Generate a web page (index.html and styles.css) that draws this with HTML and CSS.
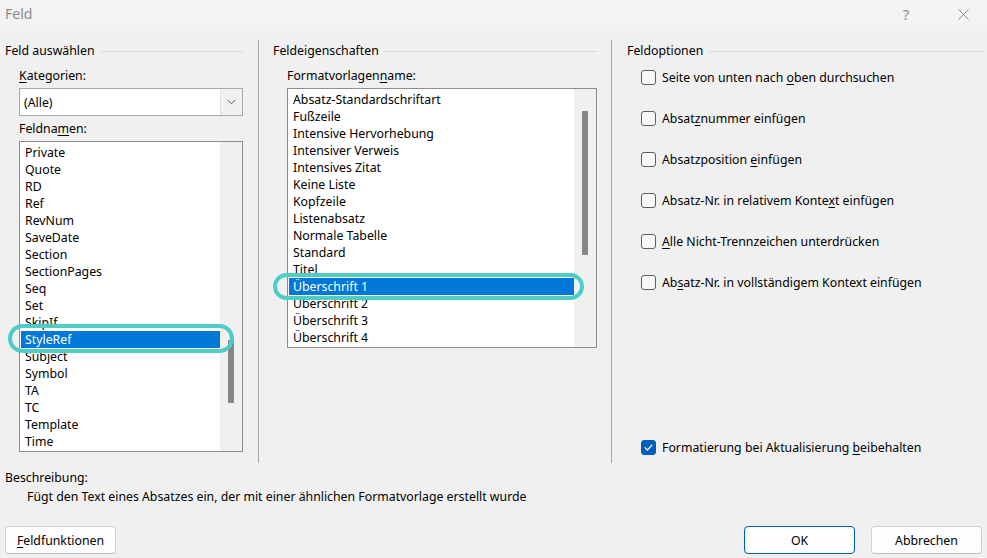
FILE: index.html
```html
<!DOCTYPE html>
<html lang="de">
<head>
<meta charset="utf-8">
<title>Feld</title>
<link rel="stylesheet" href="styles.css">
</head>
<body>
<div class="window">
  <div class="titlebar">
    <span class="title">Feld</span>
    <div class="tb-buttons">
      <span class="tb-btn help">?</span>
      <span class="tb-btn close">
        <svg width="11" height="11" viewBox="0 0 11 11"><path d="M0.5 0.5 L10.5 10.5 M10.5 0.5 L0.5 10.5" stroke="#8c8c8c" stroke-width="1" fill="none"/></svg>
      </span>
    </div>
  </div>

  <div class="main">
    <section class="col col-left">
      <div class="group-head"><span>Feld auswählen</span><span class="rule"></span></div>
      <div class="inner">
        <div class="label"><u>K</u>ategorien:</div>
        <div class="combo">
          <span class="combo-text">(Alle)</span>
          <span class="combo-btn">
            <svg width="9" height="6" viewBox="0 0 9 6"><path d="M0.5 0.8 L4.5 4.8 L8.5 0.8" stroke="#5c5c5c" stroke-width="1" fill="none"/></svg>
          </span>
        </div>
        <div class="label label-gap">Feldna<u>m</u>en:</div>
        <div class="listbox list-left">
          <div class="items">
            <div class="item">Private</div>
            <div class="item">Quote</div>
            <div class="item">RD</div>
            <div class="item">Ref</div>
            <div class="item">RevNum</div>
            <div class="item">SaveDate</div>
            <div class="item">Section</div>
            <div class="item">SectionPages</div>
            <div class="item">Seq</div>
            <div class="item">Set</div>
            <div class="item">SkipIf</div>
            <div class="item selected">StyleRef</div>
            <div class="item">Subject</div>
            <div class="item">Symbol</div>
            <div class="item">TA</div>
            <div class="item">TC</div>
            <div class="item">Template</div>
            <div class="item">Time</div>
          </div>
          <div class="track track-left"><div class="thumb thumb-left"></div></div>
          <div class="ring ring-left"></div>
        </div>
      </div>
    </section>

    <div class="vsep"></div>

    <section class="col col-mid">
      <div class="group-head"><span>Feldeigenschaften</span><span class="rule"></span></div>
      <div class="inner">
        <div class="label">Formatvorlagen<u>n</u>ame:</div>
        <div class="listbox list-mid">
          <div class="items">
            <div class="item">Absatz-Standardschriftart</div>
            <div class="item">Fußzeile</div>
            <div class="item">Intensive Hervorhebung</div>
            <div class="item">Intensiver Verweis</div>
            <div class="item">Intensives Zitat</div>
            <div class="item">Keine Liste</div>
            <div class="item">Kopfzeile</div>
            <div class="item">Listenabsatz</div>
            <div class="item">Normale Tabelle</div>
            <div class="item">Standard</div>
            <div class="item">Titel</div>
            <div class="item selected">Überschrift 1</div>
            <div class="item">Überschrift 2</div>
            <div class="item">Überschrift 3</div>
            <div class="item">Überschrift 4</div>
          </div>
          <div class="track track-mid"><div class="thumb thumb-mid"></div></div>
          <div class="ring ring-mid"></div>
        </div>
      </div>
    </section>

    <div class="vsep vsep-right"></div>

    <section class="col col-right">
      <div class="group-head"><span>Feldoptionen</span><span class="rule"></span></div>
      <div class="options">
        <label class="opt"><span class="box"></span><span>Seite von unten nach <u>o</u>ben durchsuchen</span></label>
        <label class="opt"><span class="box"></span><span>Absat<u>z</u>nummer einfügen</span></label>
        <label class="opt"><span class="box"></span><span>Absatzposition <u>e</u>infügen</span></label>
        <label class="opt"><span class="box"></span><span>Absatz-Nr. in relativem Konte<u>x</u>t einfügen</span></label>
        <label class="opt"><span class="box"></span><span><u>A</u>lle Nicht-Trennzeichen unterdrücken</span></label>
        <label class="opt"><span class="box"></span><span>Ab<u>s</u>atz-Nr. in vollständigem Kontext einfügen</span></label>
      </div>
      <label class="opt opt-last"><span class="box checked">
        <svg width="15" height="15" viewBox="0 0 15 15"><path d="M4 7.6 L6.4 10 L11 5.2" stroke="#ffffff" stroke-width="1.2" fill="none" stroke-linecap="round" stroke-linejoin="round"/></svg>
      </span><span>Formatierung bei Aktualisierung <u>b</u>eibehalten</span></label>
    </section>
  </div>

  <div class="desc">
    <div class="desc-label">Beschreibung:</div>
    <div class="desc-text">Fügt den Text eines Absatzes ein, der mit einer ähnlichen Formatvorlage erstellt wurde</div>
  </div>

  <div class="footer">
    <button class="btn"><u>F</u>eldfunktionen</button>
    <div class="spacer"></div>
    <button class="btn btn-default">OK</button>
    <button class="btn">Abbrechen</button>
  </div>
</div>
</body>
</html>
```

FILE: styles.css
```css
html, body {
  margin: 0;
  padding: 0;
}
body {
  width: 987px;
  height: 558px;
  overflow: hidden;
  background: #f0f0f0;
  font-family: "Noto Sans", "Open Sans", sans-serif;
  font-size: 12.3px;
  color: #000;
}
u {
  text-decoration-thickness: 1px;
  text-underline-offset: 2px;
}
.window {
  width: 987px;
  height: 558px;
  display: flex;
  flex-direction: column;
}

/* title bar */
.titlebar {
  height: 31px;
  background: #f3f3f3;
  display: flex;
  align-items: center;
  justify-content: space-between;
  padding-left: 5px;
  box-sizing: border-box;
}
.title {
  font-size: 14px;
  color: #8a8a8a;
  line-height: 20px;
  margin-top: -3px;
}
.tb-buttons {
  display: flex;
  align-items: center;
  height: 100%;
  padding-right: 1px;
}
.tb-btn {
  width: 46px;
  height: 100%;
  display: flex;
  align-items: center;
  justify-content: center;
  color: #8c8c8c;
}
.help {
  font-size: 15px;
  margin-right: 11px;
  margin-top: -3px;
}
.close {
  margin-top: -3px;
}

/* main three columns */
.main {
  display: flex;
  margin-top: 9px;
  height: 423px;
  padding-left: 5px;
}
.col {
  display: flex;
  flex-direction: column;
}
.col-left { width: 238px; }
.col-mid { width: 324px; }
.col-right { width: 358px; }
.vsep {
  width: 1px;
  background: #a6a6a6;
  margin: 0 14px 0 15px;
}
.vsep-right {
  margin: 0 15px 0 14px;
}
.group-head {
  height: 20px;
  display: flex;
  align-items: center;
  gap: 6px;
  white-space: nowrap;
}
.group-head .rule {
  flex: 1;
  height: 1px;
  background: #dadada;
  margin-top: 2px;
}
.inner {
  padding-left: 14px;
  display: flex;
  flex-direction: column;
}
.label {
  line-height: 16px;
  margin-top: 8px;
}
.label-gap {
  margin-top: 5px;
}

/* combo box */
.combo {
  margin-top: 4px;
  height: 28px;
  box-sizing: border-box;
  border: 1px solid #a9a9a9;
  background: #fff;
  display: flex;
  align-items: stretch;
}
.combo-text {
  flex: 1;
  padding-left: 4px;
  display: flex;
  align-items: center;
}
.combo-btn {
  width: 21px;
  margin: 0 0 0 0;
  background: #f0f0f0;
  border-left: 1px solid #e2e2e2;
  display: flex;
  align-items: center;
  justify-content: center;
}

/* list boxes */
.listbox {
  position: relative;
  margin-top: 4px;
  box-sizing: border-box;
  border: 1px solid #8c8c8c;
  display: flex;
  background: #fff;
}
.list-left { height: 311px; }
.list-mid { height: 260px; }
.items {
  flex: 1;
  padding-top: 2px;
  background: #fff;
  overflow: hidden;
}
.item {
  height: 17px;
  line-height: 17px;
  padding-left: 4px;
  margin-left: 1px;
  white-space: nowrap;
}
.item.selected {
  background: #0078d7;
  color: #fff;
}
.track {
  width: 22px;
  background: #f0f0f0;
  display: flex;
  flex-direction: column;
  align-items: center;
}
.thumb {
  width: 6px;
  background: #868686;
  border-radius: 1px;
}
.track-left { padding-top: 198px; }
.thumb-left { height: 63px; }
.track-mid { padding-top: 22px; }
.thumb-mid { height: 144px; }

/* highlight rings (annotation overlay) */
.ring {
  position: absolute;
  box-sizing: border-box;
  border: 4px solid #4dcdc6;
  border-radius: 15px;
  pointer-events: none;
}
.ring-left {
  left: -12px;
  top: 182px;
  width: 226px;
  height: 29px;
}
.ring-mid {
  left: -15px;
  top: 184px;
  width: 311px;
  height: 27px;
}

/* options */
.options {
  display: flex;
  flex-direction: column;
  gap: 21px;
  margin-top: 7px;
  padding-left: 14px;
}
.opt {
  display: flex;
  align-items: center;
  gap: 6px;
  height: 20px;
  white-space: nowrap;
}
.opt-last {
  margin-top: auto;
  margin-bottom: 6px;
  padding-left: 14px;
}
.box {
  width: 15px;
  height: 15px;
  box-sizing: border-box;
  border: 1px solid #5e5e5e;
  border-radius: 3px;
  background: #f8f8f8;
  flex: none;
}
.box.checked {
  background: #005fb8;
  border-color: #005fb8;
  position: relative;
}
.box.checked svg {
  display: block;
  margin: -1px;
}

/* description */
.desc {
  padding-left: 5px;
  margin-top: 7px;
}
.desc-label {
  line-height: 16px;
}
.desc-text {
  line-height: 16px;
  margin-top: 3px;
  padding-left: 22px;
}

/* footer buttons */
.footer {
  display: flex;
  margin-top: 21px;
  padding: 0 5px;
  gap: 16px;
}
.spacer { flex: 1; }
.btn {
  width: 111px;
  height: 28px;
  box-sizing: border-box;
  font-family: inherit;
  font-size: 12.3px;
  color: #000;
  background: #fdfdfd;
  border: 1px solid #d2d2d2;
  border-bottom-color: #bdbdbd;
  border-radius: 4px;
  padding: 0;
}
.btn-default {
  border: 1px solid #005fb8;
}
```
